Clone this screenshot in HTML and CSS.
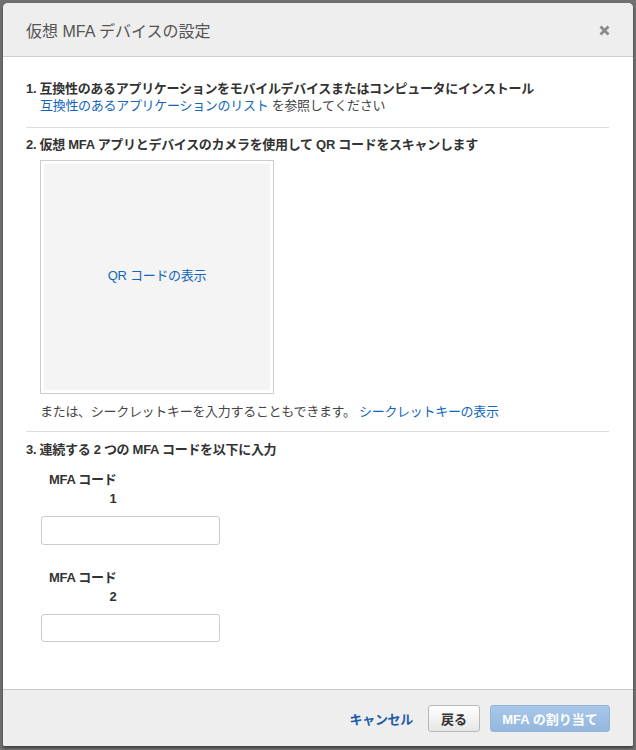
FILE: index.html
```html
<!DOCTYPE html>
<html lang="ja">
<head>
<meta charset="utf-8">
<title>仮想 MFA デバイスの設定</title>
<link rel="stylesheet" href="styles.css">
</head>
<body>
<div class="dialog">
  <div class="header">
    <h1 class="title">仮想 MFA デバイスの設定</h1>
    <span class="close" aria-label="閉じる">
      <svg width="11" height="11" viewBox="0 0 11 11"><path d="M1.5 1.5 L9.5 9.5 M9.5 1.5 L1.5 9.5" stroke="#8a8a8a" stroke-width="2.8" stroke-linecap="butt"/></svg>
    </span>
  </div>
  <div class="content">
    <div class="step step-first">
      <div class="step-title">1. 互換性のあるアプリケーションをモバイルデバイスまたはコンピュータにインストール</div>
      <div class="step-sub"><a class="link" href="#">互換性のあるアプリケーションのリスト</a> を参照してください</div>
    </div>
    <div class="step">
      <div class="step-title">2. 仮想 MFA アプリとデバイスのカメラを使用して QR コードをスキャンします</div>
      <div class="qr-frame">
        <div class="qr-inner"><a class="link" href="#">QR コードの表示</a></div>
      </div>
      <div class="secret">または、シークレットキーを入力することもできます。 <a class="link" href="#">シークレットキーの表示</a></div>
    </div>
    <div class="step step-last">
      <div class="step-title">3. 連続する 2 つの MFA コードを以下に入力</div>
      <div class="field">
        <label class="field-label">MFA コード<br>1</label>
        <input class="field-input" type="text">
      </div>
      <div class="field">
        <label class="field-label">MFA コード<br>2</label>
        <input class="field-input" type="text">
      </div>
    </div>
  </div>
  <div class="footer">
    <a class="cancel" href="#">キャンセル</a>
    <button class="btn btn-back">戻る</button>
    <button class="btn btn-primary">MFA の割り当て</button>
  </div>
</div>
</body>
</html>
```

FILE: styles.css
```css
html, body {
  margin: 0;
  padding: 0;
}
body {
  background: #707070;
  font-family: "Liberation Sans", Arial, "Noto Sans CJK JP", sans-serif;
  font-size: 13px;
  letter-spacing: -0.3px;
  color: #333;
  padding: 3px 3px 0 3px;
  height: 750px;
  box-sizing: border-box;
  overflow: hidden;
}
.dialog {
  width: 630px;
  height: 743px;
  background: #fff;
  border-radius: 5px 5px 2px 2px;
  box-shadow: 0 2px 3px rgba(0,0,0,0.45);
  display: flex;
  flex-direction: column;
  overflow: hidden;
}
.header {
  height: 53px;
  background: #eeeeee;
  border-bottom: 1px solid #cfcfcf;
  display: flex;
  align-items: center;
  justify-content: space-between;
  padding: 0 23px 0 23px;
  flex-shrink: 0;
}
.title {
  margin: 0;
  font-size: 16px;
  letter-spacing: 0;
  font-weight: normal;
  color: #555;
  padding-top: 1px;
}
.close {
  display: flex;
  margin-top: 1px;
}
.content {
  flex: 1;
  min-height: 0;
  padding: 23px 24px 0 23px;
}
.step {
  border-top: 1px solid #dcdcdc;
  padding-top: 8px;
}
.step-first {
  border-top: none;
  padding-top: 0;
  padding-bottom: 13px;
}
.step-title {
  font-weight: bold;
  line-height: 17px;
  color: #333;
}
.step-sub {
  line-height: 17px;
  color: #444;
  padding-left: 14px;
}
.link {
  color: #1166bb;
  text-decoration: none;
}
.qr-frame {
  margin: 7px 0 0 14px;
  width: 226px;
  height: 226px;
  padding: 3px;
  border: 1px solid #cccccc;
}
.qr-inner {
  width: 100%;
  height: 100%;
  background: #f4f4f4;
  display: flex;
  align-items: center;
  justify-content: center;
  padding-bottom: 6px;
  box-sizing: border-box;
}
.secret {
  margin: 9px 0 11px 14px;
  line-height: 17px;
  color: #444;
}
.step-last {
  padding-top: 9px;
}
.field {
  display: flex;
  flex-direction: column;
  align-items: flex-start;
  margin-left: 15px;
}
.field + .field {
  margin-top: 11px;
}
.field-label {
  margin-top: 12px;
  margin-left: 8px;
  text-align: right;
  white-space: nowrap;
  font-weight: bold;
  line-height: 19px;
  color: #333;
}
.field-input {
  margin-top: 8px;
  width: 179px;
  height: 29px;
  box-sizing: border-box;
  border: 1px solid #cccccc;
  border-radius: 3px;
  background: #fff;
  padding: 0 6px;
  font: inherit;
}
.field + .field .field-input {
  height: 28px;
}
.footer {
  height: 57px;
  flex-shrink: 0;
  background: #eeeeee;
  border-top: 1px solid #c8c8c8;
  display: flex;
  align-items: center;
  justify-content: flex-end;
  padding: 0 23px 0 0;
  box-sizing: border-box;
}
.cancel {
  color: #1a5ca8;
  font-weight: bold;
  text-decoration: none;
  margin-right: 15px;
}
.btn {
  font: inherit;
  font-weight: bold;
  height: 27px;
  border-radius: 3px;
  padding: 0;
  flex-shrink: 0;
  box-sizing: border-box;
  cursor: pointer;
}
.btn-back {
  width: 52px;
  background: linear-gradient(#ffffff, #e6e6e6);
  border: 1px solid #b8b8b8;
  color: #333;
  margin-right: 10px;
}
.btn-primary {
  width: 120px;
  background: linear-gradient(#a8c8ea, #94b7df);
  border: 1px solid #93b5dc;
  color: #ffffff;
}
```
